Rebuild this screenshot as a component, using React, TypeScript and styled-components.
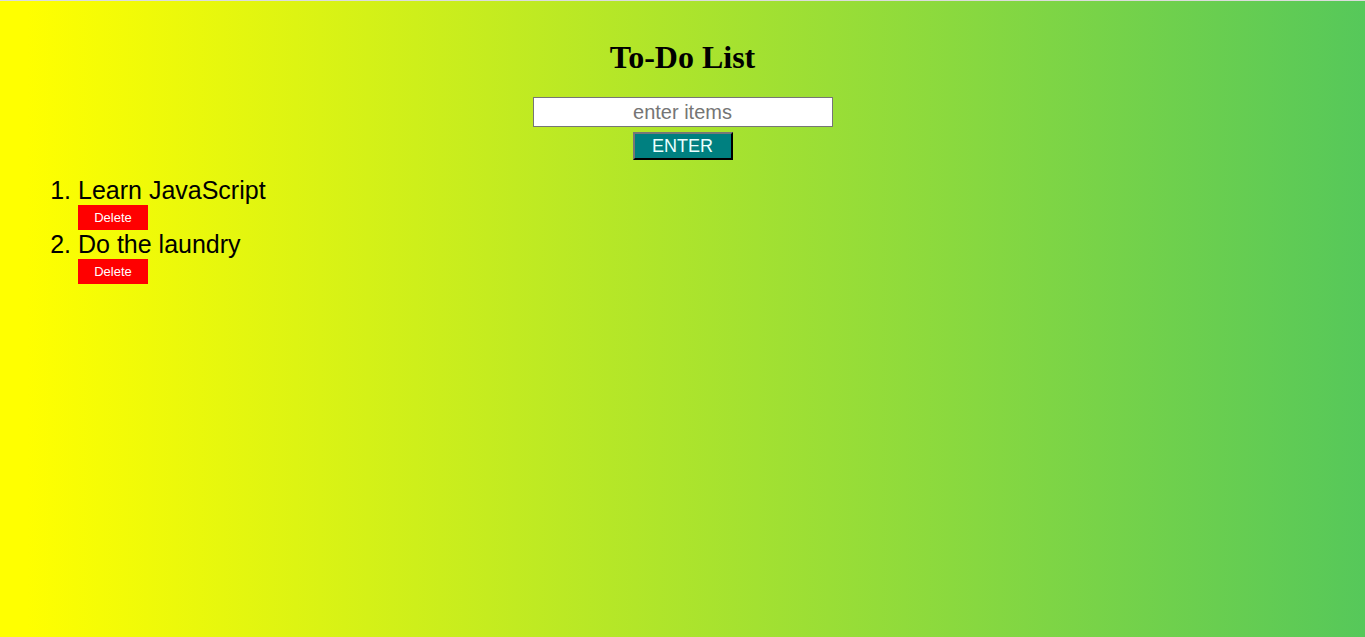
import React, { useState } from 'react';
import styled, { createGlobalStyle } from 'styled-components';

const GlobalStyle = createGlobalStyle`
	html, body {
		margin: 0;
		min-height: 100%;
	}

	body {
		background: linear-gradient(to right, #ffff00 2%, #56c85a 100%);
		border-top: 1px solid #dcdcdc;
		font-family: 'Liberation Sans', Arial, sans-serif;
		min-height: 636px;
	}
`;

const Page = styled.main`
	padding: 38px 38px 0;
`;

const Title = styled.h1`
	font-family: 'Liberation Serif', 'Times New Roman', serif;
	font-size: 32px;
	font-weight: bold;
	line-height: 37px;
	margin: 0 0 21px;
	text-align: center;
`;

const Form = styled.form`
	align-items: center;
	display: flex;
	flex-direction: column;
	gap: 5px;
`;

const ItemInput = styled.input`
	background: #fff;
	border: 1px solid #767676;
	box-sizing: border-box;
	font-family: 'Liberation Sans', Arial, sans-serif;
	font-size: 20px;
	height: 30px;
	padding: 0 4px;
	text-align: center;
	width: 300px;

	&::placeholder {
		color: #757575;
	}
`;

const EnterButton = styled.button`
	background: #008080;
	border: 2px outset #5a5a5a;
	border-color: #777 #2e2e2e #2e2e2e #777;
	box-sizing: border-box;
	color: #eaffff;
	font-family: 'Liberation Sans', Arial, sans-serif;
	font-size: 18px;
	height: 28px;
	padding: 0;
	width: 100px;
`;

const List = styled.ol`
	font-size: 25px;
	line-height: 26px;
	margin: 17px 0 0;
	padding-left: 40px;
`;

const Item = styled.li`
	margin-bottom: 1px;
`;

const DeleteButton = styled.button`
	background: #ff0000;
	border: none;
	color: #fff;
	display: block;
	font-family: 'Liberation Sans', Arial, sans-serif;
	font-size: 13px;
	height: 25px;
	margin-top: 2px;
	padding: 0;
	width: 70px;
`;

export default function App(): JSX.Element {
	const [items, setItems] = useState(['Learn JavaScript', 'Do the laundry']);
	const [text, setText] = useState('');

	const addItem = (e: React.FormEvent) => {
		e.preventDefault();
		if (!text.trim()) return;
		setItems([...items, text.trim()]);
		setText('');
	};

	return (
		<>
			<GlobalStyle />
			<Page>
				<Title>To-Do List</Title>
				<Form onSubmit={addItem}>
					<ItemInput
						placeholder="enter items"
						value={text}
						onChange={(e) => setText(e.target.value)}
					/>
					<EnterButton type="submit">ENTER</EnterButton>
				</Form>
				<List>
					{items.map((item, i) => (
						<Item key={i}>
							{item}
							<DeleteButton
								onClick={() => setItems(items.filter((_, j) => j !== i))}
							>
								Delete
							</DeleteButton>
						</Item>
					))}
				</List>
			</Page>
		</>
	);
}
